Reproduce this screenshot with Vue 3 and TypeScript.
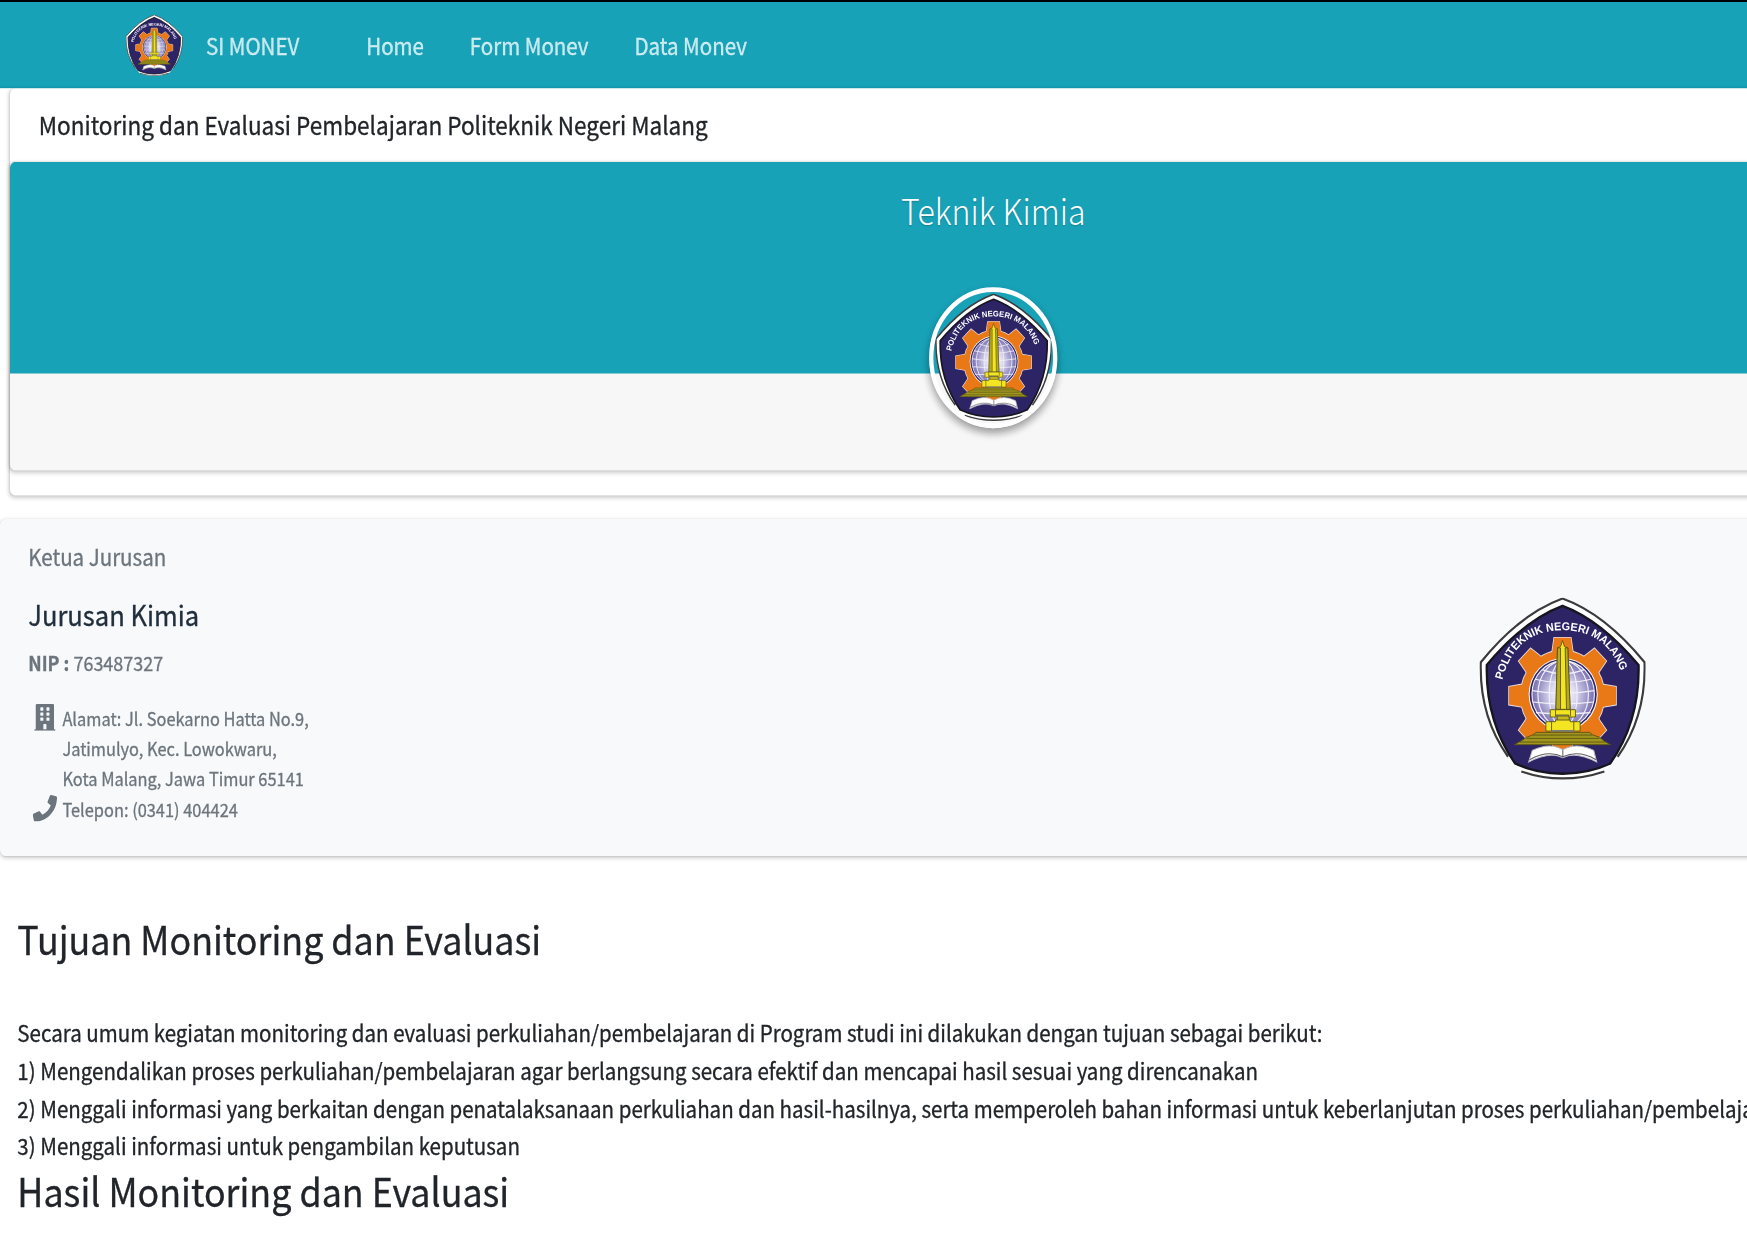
<script setup lang="ts">
const navItems: string[] = ['Home', 'Form Monev', 'Data Monev']

const address: string[] = [
  'Alamat: Jl. Soekarno Hatta No.9,',
  'Jatimulyo, Kec. Lowokwaru,',
  'Kota Malang, Jawa Timur 65141',
]

const goals: string[] = [
  'Secara umum kegiatan monitoring dan evaluasi perkuliahan/pembelajaran di Program studi ini dilakukan dengan tujuan sebagai berikut:',
  '1) Mengendalikan proses perkuliahan/pembelajaran agar berlangsung secara efektif dan mencapai hasil sesuai yang direncanakan',
  '2) Menggali informasi yang berkaitan dengan penatalaksanaan perkuliahan dan hasil-hasilnya, serta memperoleh bahan informasi untuk keberlanjutan proses perkuliahan/pembelajaran',
  '3) Menggali informasi untuk pengambilan keputusan',
]

const toothAngles: number[] = [0, 45, 90, 135, 180, 225, 270, 315]
const windows: number[][] = [64, 160, 256].flatMap((y) => [[128, y], [256, y]])
</script>

<template>
  <div class="window">
    <svg class="defs" width="0" height="0" aria-hidden="true">
      <defs>
        <radialGradient id="globe" cx="0.5" cy="0.5" r="0.5">
          <stop offset="0" stop-color="#ffffff" />
          <stop offset="0.4" stop-color="#dddaf0" />
          <stop offset="1" stop-color="#766eb0" />
        </radialGradient>
        <g id="gear">
          <circle r="126" />
          <path v-for="a in toothAngles" :key="a" :transform="`rotate(${a})`" d="M-32 -115L-25 -161H25L32 -115Z" />
        </g>
        <path id="motto" d="M127 288Q165 139 308 139Q452 139 492 288" />
      </defs>
      <symbol id="crest" viewBox="57 41 502 549" preserveAspectRatio="none">
        <path d="M308 44Q180 90 61 235Q53 400 150 524L178 560Q308 616 438 560L468 524Q564 400 555 235Q436 90 308 44Z" fill="#fff" />
        <path d="M144 518Q57 397 62 235Q180 90 308 44Q436 90 555 235Q560 397 474 518M184 562Q308 604 434 562" fill="none" stroke="#3b3b3b" stroke-width="6.5" />
        <path d="M308 66Q194 108 80 243Q76 410 165 538Q228 568 308 569Q388 568 452 538Q541 410 537 243Q422 108 308 66Z" fill="#2d2466" stroke="#17151d" stroke-width="7" />
        <g transform="translate(308 335) scale(1 1.075)">
          <use href="#gear" fill="#e5dce5" stroke="#e5dce5" stroke-width="5" />
          <use href="#gear" fill="#e97817" />
        </g>
        <ellipse cx="310" cy="331" rx="104" ry="109" fill="#fff" />
        <ellipse cx="310" cy="331" rx="101" ry="106" fill="#2d2466" />
        <ellipse cx="310" cy="331" rx="94" ry="100" fill="url(#globe)" />
        <g fill="none" stroke="#f2f0fa" stroke-width="3.5">
          <ellipse cx="310" cy="331" rx="94" ry="100" />
          <ellipse cx="310" cy="331" rx="76" ry="100" />
          <ellipse cx="310" cy="331" rx="42" ry="100" />
          <path d="M247 257Q310 282 373 257M225 286Q310 307 395 286M216 320Q310 336 404 320M218 354Q310 365 402 354M228 386Q310 393 392 386" />
        </g>
        <path d="M279 484H337L328 494H288Z" fill="#e97817" />
        <g stroke="#55500e" stroke-width="2.5" stroke-linejoin="round">
          <path d="M288 376L293 192L302 188L308 170L314 188L324 192L331 376Z" fill="#f4e522" />
          <path d="M288 376L293 192H302V376ZM316 192H324L331 376H320Z" fill="#b6aa22" />
          <path d="M292 396H328V414H292Z" fill="#c6b91e" />
          <path d="M271 377H347V399H327V393H289V399H271Z" fill="#f4e522" />
          <path d="M258 413H287V408H331V413H361V441H258Z" fill="#f4e522" />
          <path d="M275 413V441M342 413V441M287 377V396M332 377V396" fill="none" />
          <path d="M228 445H390L398 452L420 460L435 472L453 482H163L181 472L199 460L220 452Z" fill="#a0961f" />
          <path d="M219 453H398M200 463H419M180 474H435" fill="none" />
        </g>
        <path d="M270 443H348L340 438H280Z" fill="#777b7a" />
        <path d="M217 499Q270 473 309 497Q350 473 402 499L411 534Q349 501 309 521Q268 501 206 534Z" fill="#fff" stroke="#bbb7c0" stroke-width="3" />
        <path d="M209 527Q263 497 309 518Q357 497 409 527M309 498V520" fill="none" stroke="#625e66" stroke-width="3" />
        <text fill="#fff" font-family="Liberation Sans, Arial, sans-serif" font-size="34" font-weight="700">
          <textPath href="#motto" textLength="486" lengthAdjust="spacingAndGlyphs">POLITEKNIK NEGERI MALANG</textPath>
        </text>
      </symbol>
    </svg>

    <div class="stage">
      <nav class="navbar">
        <svg class="brand-logo"><use href="#crest" /></svg>
        <a class="brand">SI MONEV</a>
        <div class="links">
          <a v-for="item in navItems" :key="item">{{ item }}</a>
        </div>
      </nav>

      <section class="card overview">
        <h1 class="card-title">Monitoring dan Evaluasi Pembelajaran Politeknik Negeri Malang</h1>
        <div class="card profile">
          <div class="profile-header">
            <h2 class="department">Teknik Kimia</h2>
            <div class="avatar"><svg class="avatar-logo"><use href="#crest" /></svg></div>
          </div>
        </div>
      </section>

      <section class="card contact">
        <div class="details">
          <div class="role">Ketua Jurusan</div>
          <h2 class="name">Jurusan Kimia</h2>
          <p class="nip"><b>NIP :</b> 763487327</p>
          <ul class="info">
            <li>
              <svg class="icon building" viewBox="0 0 448 512">
                <path fill="currentColor" d="M436 480H416V24Q416 0 392 0H56Q32 0 32 24V480H12Q0 480 0 492V512H448V492Q448 480 436 480Z" />
                <rect v-for="[x, y] in windows" :key="`${x}-${y}`" :x="x" :y="y" width="64" height="64" rx="12" fill="#f8f9fa" />
                <path d="M192 480V396Q192 384 204 384H244Q256 384 256 396V480Z" fill="#f8f9fa" />
              </svg>
              <div v-for="line in address" :key="line">{{ line }}</div>
            </li>
            <li>
              <svg class="icon phone" viewBox="0 0 512 512">
                <path fill="currentColor" d="M493.4 24.6l-104-24c-11.3-2.6-22.9 3.3-27.5 13.9l-48 112c-4.2 9.8-1.4 21.3 6.9 28l60.6 49.6c-36 76.7-98.9 140.5-177.2 177.2l-49.6-60.6c-6.8-8.3-18.2-11.1-28-6.9l-112 48C3.9 366.5-2 378.1.6 389.4l24 104C27.1 504.2 36.7 512 48 512c256.1 0 464-207.5 464-464 0-11.2-7.7-20.9-18.6-23.4z" />
              </svg>
              <div>Telepon: (0341) 404424</div>
            </li>
          </ul>
        </div>
        <svg class="contact-logo"><use href="#crest" /></svg>
      </section>

      <main class="content">
        <h3>Tujuan Monitoring dan Evaluasi</h3>
        <div class="goals">
          <div v-for="goal in goals" :key="goal">{{ goal }}</div>
        </div>
        <h3>Hasil Monitoring dan Evaluasi</h3>
      </main>
    </div>
  </div>
</template>

<style>
body {
  margin: 0;
  background: #fff;
}
</style>

<style scoped>
.window {
  width: 1747px;
  height: 1238px;
  overflow: hidden;
  border-top: 2px solid #000;
  background: #fff;
}
.defs {
  position: absolute;
}
.stage {
  width: 1390px;
  height: 790px;
  transform: scale(1.425, 1.567);
  transform-origin: 0 0;
  color: #212529;
  font-family: "Noto Sans CJK SC", "Noto Sans CJK JP", sans-serif;
  font-size: 14.4px;
  line-height: 24px;
  white-space: nowrap;
  -webkit-text-stroke: 0.2px currentColor;
}
svg text {
  -webkit-text-stroke: 0;
}
h1, h2, h3, p, ul {
  margin: 0;
  padding: 0;
  font-weight: 400;
}
.navbar {
  position: relative;
  display: flex;
  align-items: center;
  box-sizing: border-box;
  height: 55.4px;
  padding-left: 88px;
  background: #17a2b8;
  box-shadow: inset 0 -1px 0 #1297ac;
  color: rgba(255, 255, 255, 0.75);
}
.brand-logo {
  width: 40.5px;
  height: 39.5px;
}
.brand {
  width: 112.5px;
  margin-left: 16px;
}
.links {
  display: flex;
  gap: 32.2px;
}
.card {
  box-sizing: border-box;
  border-radius: 4px;
  box-shadow: 0 0 1px rgba(0, 0, 0, 0.08), 0 1px 3px rgba(0, 0, 0, 0.2);
}
.overview {
  width: 1380px;
  height: 259.4px;
  margin-left: 7px;
  background: #fff;
}
.card-title {
  box-sizing: border-box;
  height: 46.4px;
  padding: 10.8px 0 0 20.2px;
  font-size: 15.83px;
  line-height: 26.4px;
}
.profile {
  height: 197px;
  background: #f7f7f7;
}
.profile-header {
  position: relative;
  box-sizing: border-box;
  height: 135px;
  padding-top: 15.5px;
  border-radius: 4px 4px 0 0;
  background: #17a2b8;
  text-align: center;
}
.department {
  color: #fff;
  font-size: 22.5px;
  font-weight: 300;
  line-height: 30px;
  text-shadow: 0 1px 1px rgba(0, 0, 0, 0.2);
  -webkit-text-stroke: 0;
}
.avatar {
  position: absolute;
  top: 80px;
  left: 50%;
  display: flex;
  align-items: center;
  justify-content: center;
  box-sizing: border-box;
  width: 90px;
  height: 90px;
  margin-left: -45px;
  overflow: hidden;
  border: 3px solid #fff;
  border-radius: 50%;
  box-shadow: 0 3px 6px rgba(0, 0, 0, 0.25), 0 3px 6px rgba(0, 0, 0, 0.18);
}
.avatar-logo {
  flex: none;
  width: 82.5px;
  height: 82px;
}
.contact {
  display: flex;
  width: 1300px;
  height: 215px;
  margin-top: 15.2px;
  padding: 12.1px 20px 0 19.8px;
  background: #f8f9fa;
  color: #6c757d;
}
.details {
  width: 1018px;
}
.name {
  margin-top: 12px;
  color: #212f3c;
  font-size: 17.95px;
}
.nip {
  margin-top: 8.7px;
  font-size: 12.6px;
  line-height: 21px;
}
.info {
  margin-top: 16.2px;
  padding-left: 24px;
  list-style: none;
  font-size: 11.5px;
  line-height: 19.2px;
}
.info li {
  position: relative;
}
.icon {
  position: absolute;
  height: 17.1px;
}
.building {
  top: -0.3px;
  left: -20.2px;
  width: 15px;
}
.phone {
  top: 0;
  left: -21px;
  width: 17px;
}
.contact-logo {
  width: 117px;
  height: 117px;
  margin-top: 38.2px;
}
.content {
  padding: 35.8px 0 0 12.2px;
}
h3 {
  font-size: 25.15px;
  line-height: 33.6px;
}
.goals {
  margin-top: 31.4px;
}
.goals + h3 {
  margin-top: 0.5px;
}
</style>
